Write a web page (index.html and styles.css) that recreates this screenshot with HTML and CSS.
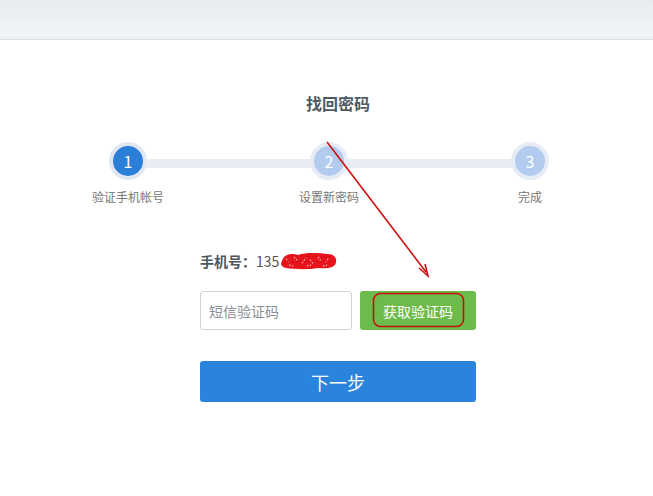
FILE: index.html
```html
<!DOCTYPE html>
<html lang="zh-CN">
<head>
    <meta charset="UTF-8">
    <title>找回密码</title>
    <link rel="stylesheet" href="styles.css">
</head>
<body>
    <div class="topbar"></div>

    <div class="page">
        <h1 class="title">找回密码</h1>

        <div class="steps">
            <div class="step-dot active">1</div>
            <div class="step-bar"></div>
            <div class="step-dot">2</div>
            <div class="step-bar"></div>
            <div class="step-dot">3</div>

            <div class="step-label"><span>验证手机帐号</span></div>
            <div></div>
            <div class="step-label"><span>设置新密码</span></div>
            <div></div>
            <div class="step-label"><span>完成</span></div>
        </div>

        <div class="form">
            <p class="phone"><strong>手机号：</strong>135<svg class="smudge" width="58" height="20" viewBox="0 0 58 20">
                <path d="M2 10 C4 3 12 2 18 4 C26 1 40 2 48 3 C54 3 57 7 56 11 C56 17 46 18 38 17 C28 19 14 18 6 17 C1 16 0 13 2 10 Z" fill="#e8141b"/>
                <path d="M6 8 L10 12 M14 6 L18 10 M22 12 L26 7 M30 9 L34 13 M38 6 L41 10 M45 11 L49 7 M9 14 L13 15 M27 15 L31 14 M43 15 L47 14" stroke="#f7b0b3" stroke-width="1.3" stroke-dasharray="1.5 1.5"/>
                <path d="M4 11 L52 10 M8 5 L50 6" stroke="#c90a12" stroke-width="1" stroke-dasharray="2 2"/>
            </svg></p>

            <div class="code-row">
                <input class="code-input" type="text" placeholder="短信验证码">
                <button class="btn-code">获取验证码</button>
            </div>

            <button class="btn-next">下一步</button>
        </div>
    </div>

    <!-- red hand-drawn annotation on top of the screenshot -->
    <svg class="annot" width="653" height="496" viewBox="0 0 653 496">
        <line x1="327" y1="142" x2="426" y2="272" stroke="#d01010" stroke-width="1.6"/>
        <path d="M419 268 L428 276 L425 264" fill="none" stroke="#d01010" stroke-width="1.6"/>
        <rect x="373.5" y="293.5" width="90" height="33" rx="7" fill="none" stroke="#c41010" stroke-width="1.6"/>
    </svg>
</body>
</html>
```

FILE: styles.css
```css
* {
    box-sizing: border-box;
    margin: 0;
    padding: 0;
}

body {
    background: #fff;
    font-family: "Noto Sans CJK SC", "Liberation Sans", sans-serif;
    color: #555;
    position: relative;
    width: 653px;
    height: 496px;
    overflow: hidden;
}

.topbar {
    height: 40px;
    background: linear-gradient(#e6ebf0, #f2f5f8 85%, #eef1f5);
    border-bottom: 1px solid #dde1e7;
}

.page {
    display: flex;
    flex-direction: column;
}

.title {
    width: 276px;
    margin: 52px 0 0 200px;
    font-size: 16px;
    line-height: 22px;
    font-weight: bold;
    text-align: center;
    color: #505a62;
}

.steps {
    display: grid;
    grid-template-columns: 38px 1fr 38px 1fr 38px;
    align-items: center;
    width: 440px;
    margin: 28px 0 0 109px;
}

.step-dot {
    width: 38px;
    height: 38px;
    border-radius: 50%;
    border: 4px solid #e6ebf5;
    background: #b2cbee;
    color: #fff;
    font-size: 16px;
    line-height: 30px;
    text-align: center;
}

.step-dot.active {
    background: #2b7fd9;
    border-color: #e2e8f2;
}

.step-bar {
    height: 9px;
    background: #e8ecf5;
    margin: 4px -2px 0;
}

.step-label {
    display: flex;
    justify-content: center;
    white-space: nowrap;
    margin-top: 9px;
    font-size: 12px;
    line-height: 16px;
    color: #777;
}

.form {
    width: 276px;
    margin: 46px 0 0 200px;
}

.phone {
    display: flex;
    align-items: center;
    font-size: 14px;
    line-height: 20px;
    color: #555;
}

.phone strong {
    color: #4f575e;
}

.smudge {
    margin-left: 1px;
}

.code-row {
    display: flex;
    gap: 8px;
    margin-top: 20px;
}

.code-input {
    width: 152px;
    height: 39px;
    border: 1px solid #cfd3d8;
    border-radius: 3px;
    padding: 0 8px;
    font-family: inherit;
    font-size: 14px;
    color: #555;
    outline: none;
}

.code-input::placeholder {
    color: #8a8f95;
}

.btn-code {
    width: 116px;
    height: 39px;
    border: none;
    border-radius: 3px;
    background: #6dbb4a;
    color: #fff;
    font-family: inherit;
    font-size: 14px;
}

.btn-next {
    display: block;
    width: 276px;
    height: 41px;
    margin-top: 31px;
    border: none;
    border-radius: 3px;
    background: #2b84dc;
    color: #fff;
    font-family: inherit;
    font-size: 18px;
}

.annot {
    position: absolute;
    left: 0;
    top: 0;
    pointer-events: none;
}
```
